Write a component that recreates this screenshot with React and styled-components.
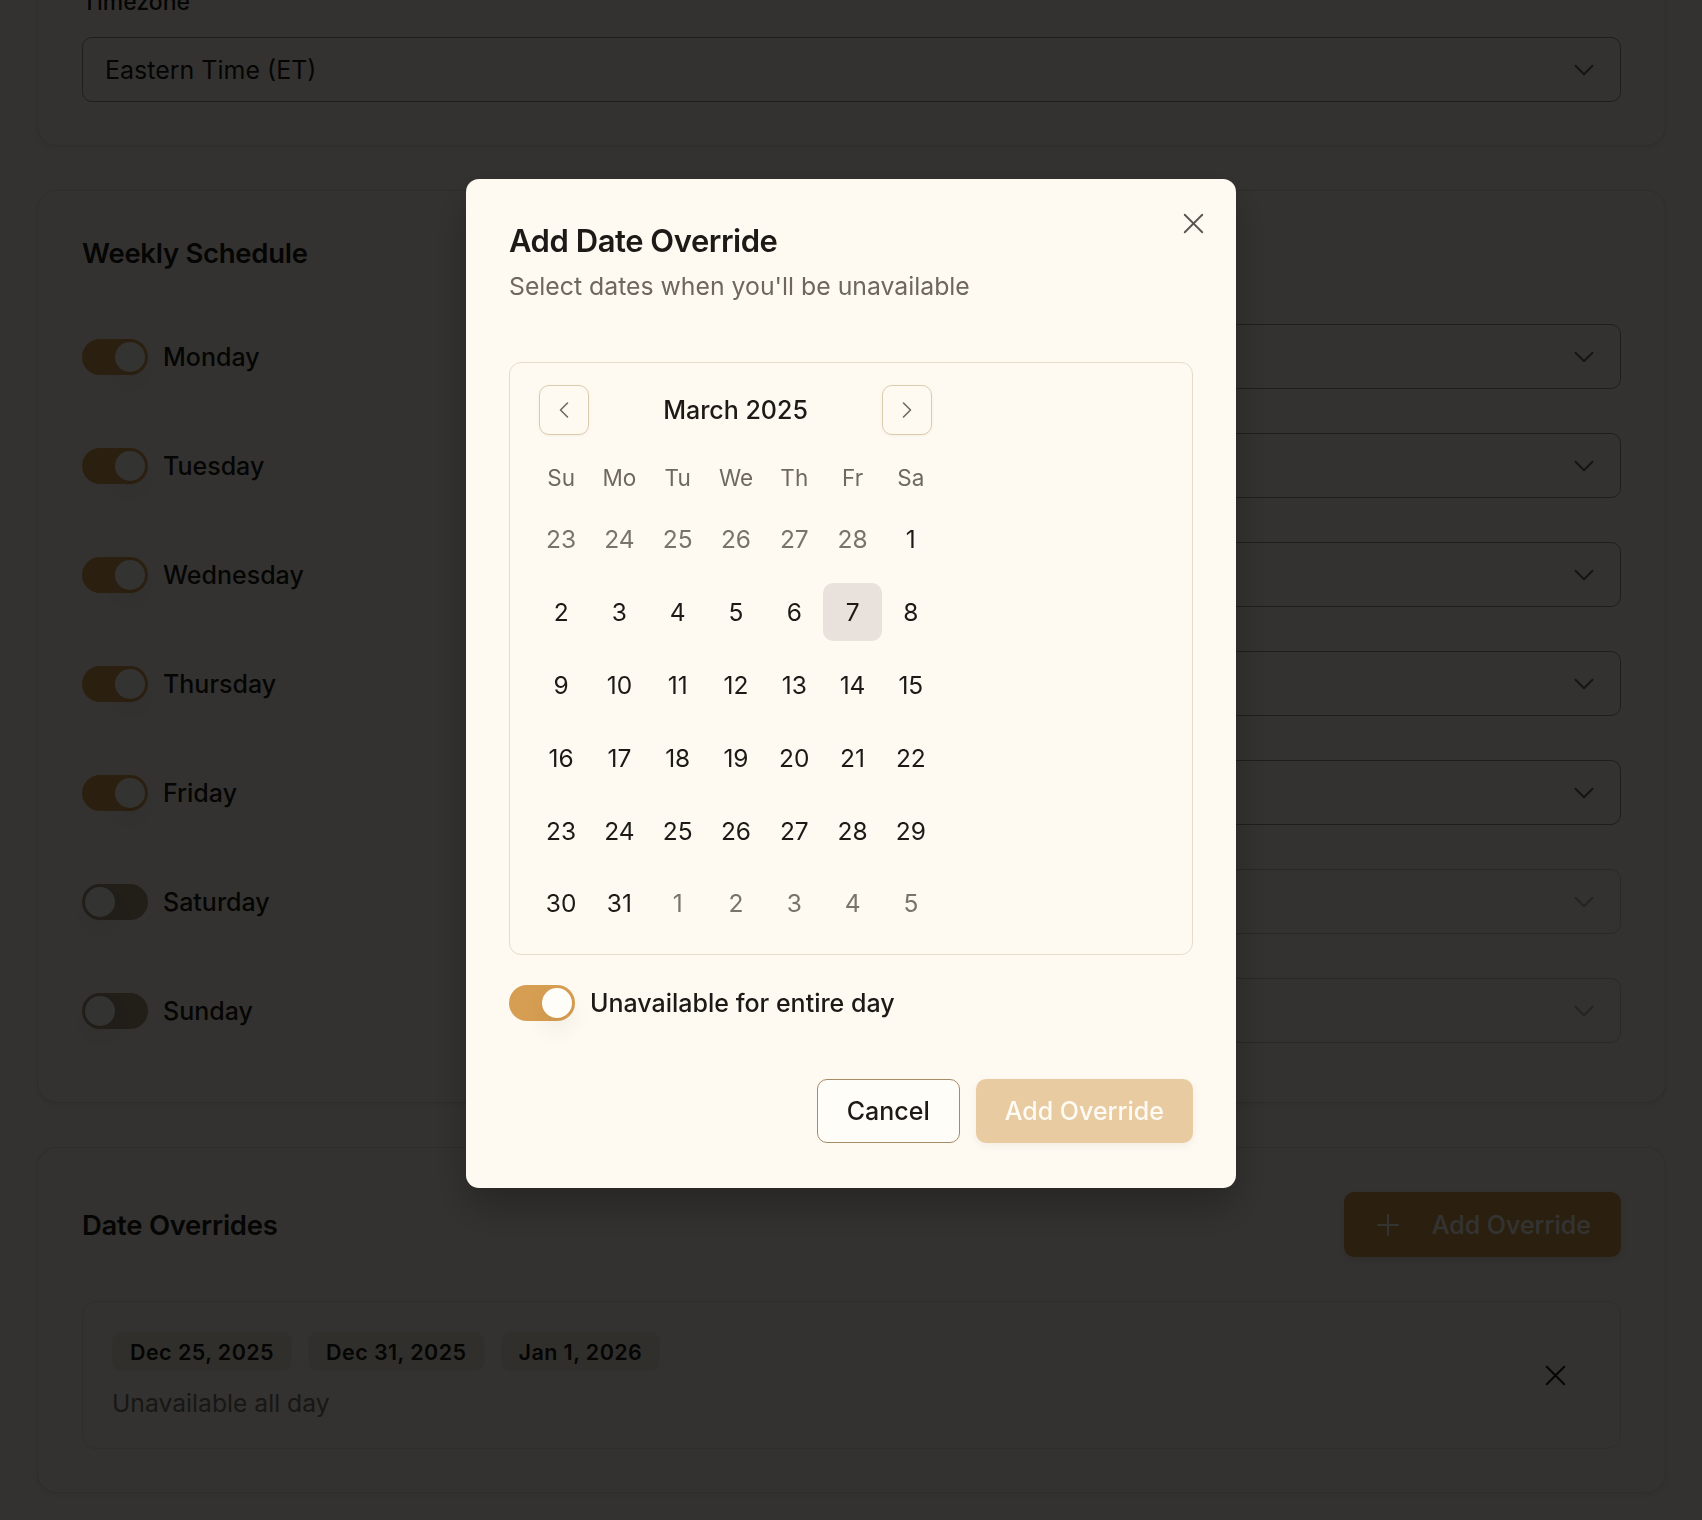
import React from 'react';
import styled, { createGlobalStyle } from 'styled-components';
import { ChevronDown, ChevronLeft, ChevronRight, Plus, X } from 'lucide-react';

const GlobalStyle = createGlobalStyle`
  * { box-sizing: border-box; }
  body {
    margin: 0;
    background: #fdf9f1;
    color: #1c1917;
    font-family: Inter, "Noto Sans", sans-serif;
  }
  button { font-family: inherit; }
`;

const days = [
  { name: 'Monday', on: true },
  { name: 'Tuesday', on: true },
  { name: 'Wednesday', on: true },
  { name: 'Thursday', on: true },
  { name: 'Friday', on: true },
  { name: 'Saturday', on: false },
  { name: 'Sunday', on: false },
];

// march 2025, with the trailing / leading days of the neighbour months
const weeks = [
  [[23, 1], [24, 1], [25, 1], [26, 1], [27, 1], [28, 1], [1, 0]],
  [[2, 0], [3, 0], [4, 0], [5, 0], [6, 0], [7, 0], [8, 0]],
  [[9, 0], [10, 0], [11, 0], [12, 0], [13, 0], [14, 0], [15, 0]],
  [[16, 0], [17, 0], [18, 0], [19, 0], [20, 0], [21, 0], [22, 0]],
  [[23, 0], [24, 0], [25, 0], [26, 0], [27, 0], [28, 0], [29, 0]],
  [[30, 0], [31, 0], [1, 1], [2, 1], [3, 1], [4, 1], [5, 1]],
];

function App() {
  return (
    <>
      <GlobalStyle />
      <Page>
        <Card>
          <Label>Timezone</Label>
          <Select>
            <span>Eastern Time (ET)</span>
            <ChevronDown size={34} strokeWidth={1.4} />
          </Select>
        </Card>

        <Card $bottom={59}>
          <SectionTitle>Weekly Schedule</SectionTitle>
          <DayList>
            {days.map((d) => (
              <DayRow key={d.name}>
                <DayLabel>
                  <Switch $on={d.on}>
                    <Thumb />
                  </Switch>
                  <span>{d.name}</span>
                </DayLabel>
                <Select $disabled={!d.on}>
                  <span>9:00 AM – 5:00 PM</span>
                  <ChevronDown size={34} strokeWidth={1.4} />
                </Select>
              </DayRow>
            ))}
          </DayList>
        </Card>

        <Card>
          <SectionHeader>
            <SectionTitle>Date Overrides</SectionTitle>
            <PrimaryButton $withIcon>
              <Plus size={34} strokeWidth={1.4} />
              Add Override
            </PrimaryButton>
          </SectionHeader>
          <OverrideItem>
            <div>
              <Chips>
                <Chip>Dec 25, 2025</Chip>
                <Chip>Dec 31, 2025</Chip>
                <Chip>Jan 1, 2026</Chip>
              </Chips>
              <Muted>Unavailable all day</Muted>
            </div>
            <IconButton>
              <X size={35} strokeWidth={1.4} />
            </IconButton>
          </OverrideItem>
        </Card>
      </Page>

      <Overlay>
        <Dialog>
          <CloseButton>
            <X size={35} strokeWidth={1.25} />
          </CloseButton>
          <DialogTitle>Add Date Override</DialogTitle>
          <DialogDescription>Select dates when you'll be unavailable</DialogDescription>

          <Calendar>
            <CalendarInner>
              <Caption>
                <NavButton>
                  <ChevronLeft size={28} strokeWidth={1.4} />
                </NavButton>
                <MonthLabel>March 2025</MonthLabel>
                <NavButton>
                  <ChevronRight size={28} strokeWidth={1.4} />
                </NavButton>
              </Caption>
              <WeekHead>
                {['Su', 'Mo', 'Tu', 'We', 'Th', 'Fr', 'Sa'].map((w) => (
                  <span key={w}>{w}</span>
                ))}
              </WeekHead>
              <DayGrid>
                {weeks.flat().map(([n, outside], i) => (
                  <DayCell key={i} $outside={!!outside} $selected={i === 12}>
                    {n}
                  </DayCell>
                ))}
              </DayGrid>
            </CalendarInner>
          </Calendar>

          <ToggleRow>
            <Switch $on>
              <Thumb />
            </Switch>
            <span>Unavailable for entire day</span>
          </ToggleRow>

          <Footer>
            <OutlineButton>Cancel</OutlineButton>
            <PrimaryButton $disabled>Add Override</PrimaryButton>
          </Footer>
        </Dialog>
      </Overlay>
    </>
  );
}

export default App;

const Page = styled.div`
  display: flex;
  flex-direction: column;
  gap: 44px;
  padding: 0 36px 30px 37px;
  margin-top: -58px;
`;

const Card = styled.section`
  background: #fdf9f1;
  border: 1px solid #e6ded0;
  border-radius: 20px;
  padding: 44px 44px ${(p) => p.$bottom || 43}px;
  box-shadow: 0 2px 6px rgba(60, 40, 10, 0.08);
`;

const Label = styled.div`
  font-size: 23px;
  font-weight: 500;
  line-height: 30px;
  margin-bottom: 20px;
`;

const Select = styled.div`
  height: 65px;
  border: 1px solid #a09580;
  border-radius: 10px;
  padding: 0 19px 0 22px;
  display: flex;
  align-items: center;
  justify-content: space-between;
  font-size: 25px;
  color: #1c1917;
  flex: 1;
  opacity: ${(p) => (p.$disabled ? 0.5 : 1)};

  svg {
    color: #6e6658;
  }
`;

const SectionTitle = styled.h2`
  margin: 0;
  font-size: 27.5px;
  font-weight: 600;
  line-height: 36px;
  letter-spacing: -0.01em;
`;

const DayList = styled.div`
  margin-top: 53px;
  display: flex;
  flex-direction: column;
  gap: 44px;
`;

const DayRow = styled.div`
  display: flex;
  align-items: center;
`;

const DayLabel = styled.div`
  width: 440px;
  display: flex;
  align-items: center;
  gap: 15px;
  font-size: 25px;
  font-weight: 500;
`;

const Switch = styled.div`
  width: 66px;
  height: 36px;
  border-radius: 18px;
  padding: 3px;
  flex-shrink: 0;
  display: flex;
  justify-content: ${(p) => (p.$on ? 'flex-end' : 'flex-start')};
  background: ${(p) => (p.$on ? '#d69e52' : '#a8997f')};
`;

const Thumb = styled.div`
  width: 30px;
  height: 30px;
  border-radius: 50%;
  background: #fffdf8;
  box-shadow: 0 12px 22px rgba(60, 40, 10, 0.07);
`;

const SectionHeader = styled.div`
  display: flex;
  align-items: center;
  justify-content: space-between;
`;

const PrimaryButton = styled.button`
  height: ${(p) => (p.$disabled ? '64px' : '65px')};
  border: none;
  border-radius: 10px;
  background: #d69e52;
  color: #fffdf8;
  display: flex;
  align-items: center;
  gap: 27px;
  padding: ${(p) => (p.$withIcon ? '0 30px 0 27px' : '0 29px')};
  font-size: 25px;
  font-weight: 500;
  opacity: ${(p) => (p.$disabled ? 0.5 : 1)};
  box-shadow: 0 3px 8px rgba(120, 80, 20, 0.15);
`;

const OutlineButton = styled.button`
  height: 64px;
  padding: 0 29px;
  border: 1px solid #a58b66;
  border-radius: 10px;
  background: #fffdf8;
  color: #1c1917;
  font-size: 25px;
  font-weight: 500;
`;

const OverrideItem = styled.div`
  margin-top: 44px;
  border: 1px solid #e6ded0;
  border-radius: 14px;
  padding: 30px 40px 30px 29px;
  display: flex;
  align-items: center;
  justify-content: space-between;
`;

const Chips = styled.div`
  display: flex;
  gap: 16px;
`;

const Chip = styled.span`
  height: 39px;
  padding: 0 18px;
  border-radius: 10px;
  background: #efe8dc;
  display: flex;
  align-items: center;
  font-size: 21.5px;
  font-weight: 600;
  letter-spacing: 0.02em;
`;

const Muted = styled.div`
  margin-top: 17px;
  font-size: 24.7px;
  line-height: 30px;
  color: #7a736a;
`;

const IconButton = styled.button`
  width: 50px;
  height: 50px;
  border: none;
  background: none;
  display: flex;
  align-items: center;
  justify-content: center;
  color: #1c1917;
  padding: 0;
`;

const Overlay = styled.div`
  position: fixed;
  inset: 0;
  background: rgba(0, 0, 0, 0.8);
  display: flex;
  justify-content: center;
  align-items: flex-start;
  padding-top: 179px;
`;

const Dialog = styled.div`
  position: relative;
  width: 770px;
  background: #fefaf2;
  border-radius: 13px;
  padding: 44px 43px 45px;
  box-shadow: 0 20px 40px rgba(0, 0, 0, 0.25);
`;

const CloseButton = styled.button`
  position: absolute;
  top: 27px;
  right: 25px;
  border: none;
  background: none;
  padding: 0;
  display: flex;
  color: #57534c;
`;

const DialogTitle = styled.h2`
  margin: 0;
  font-size: 31px;
  font-weight: 600;
  line-height: 36px;
  letter-spacing: -0.015em;
`;

const DialogDescription = styled.p`
  margin: 12px 0 0;
  font-size: 24.8px;
  line-height: 30px;
  color: #6f675e;
`;

const Calendar = styled.div`
  margin-top: 61px;
  border: 1px solid #e6dcc9;
  border-radius: 12px;
  padding: 22px;
`;

const CalendarInner = styled.div`
  width: 408px;
`;

const Caption = styled.div`
  display: flex;
  align-items: center;
  justify-content: space-between;
  padding: 0 8px 0 7px;
`;

const NavButton = styled.button`
  width: 50px;
  height: 50px;
  border: 1px solid #dccbaa;
  border-radius: 10px;
  background: transparent;
  display: flex;
  align-items: center;
  justify-content: center;
  color: #716a5f;
  padding: 0;
  box-shadow: 0 1px 3px rgba(120, 90, 40, 0.06);
`;

const MonthLabel = styled.div`
  font-size: 25px;
  font-weight: 500;
`;

const WeekHead = styled.div`
  margin-top: 27px;
  display: grid;
  grid-template-columns: repeat(7, 1fr);
  height: 30px;
  align-items: center;
  text-align: center;
  font-size: 22.5px;
  color: #6f6860;
`;

const DayGrid = styled.div`
  margin-top: 18px;
  display: grid;
  grid-template-columns: repeat(7, 1fr);
  row-gap: 14.9px;
`;

const DayCell = styled.div`
  height: 58px;
  border-radius: 10px;
  display: flex;
  align-items: center;
  justify-content: center;
  font-size: 24.5px;
  color: ${(p) => (p.$outside ? '#7a7369' : '#1c1917')};
  background: ${(p) => (p.$selected ? '#e9e1dc' : 'transparent')};
`;

const ToggleRow = styled.div`
  margin-top: 30px;
  display: flex;
  align-items: center;
  gap: 15px;
  font-size: 25px;
  font-weight: 500;
`;

const Footer = styled.div`
  margin-top: 58px;
  display: flex;
  justify-content: flex-end;
  gap: 16px;
`;
